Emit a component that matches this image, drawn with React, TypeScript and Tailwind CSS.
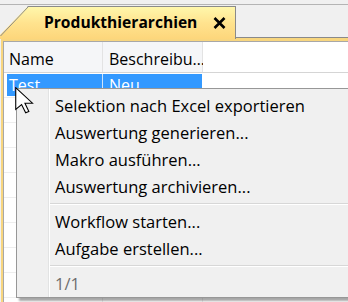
const font = { fontFamily: '"Open Sans", "Noto Sans", sans-serif' };

const items1 = [
  'Selektion nach Excel exportieren',
  'Auswertung generieren...',
  'Makro ausführen...',
  'Auswertung archivieren...',
];
const items2 = ['Workflow starten...', 'Aufgabe erstellen...'];

const MenuItem = ({ label, muted }: { label: string; muted?: boolean }) => (
  <div
    className={`h-[27px] pl-[5px] leading-[27px] text-[16.5px] whitespace-nowrap ${
      muted ? 'text-[#6d6d6d]' : 'text-black'
    }`}
  >
    {label}
  </div>
);

const Separator = () => (
  <div className="h-[8px] pt-[3px]">
    <div className="h-px bg-[#d7d7d7]" />
    <div className="h-px bg-white" />
  </div>
);

const Cursor = () => (
  <svg
    className="absolute left-[15px] top-[87px]"
    width="19"
    height="27"
    viewBox="-0.5 -0.5 13 20"
    preserveAspectRatio="none"
  >
    <path
      d="M0 0 L0 16 L4 12.5 L6.8 18.6 L9 17.6 L6.3 11.5 L11.5 11.5 Z"
      fill="white"
      stroke="black"
      strokeWidth="0.75"
      strokeLinejoin="miter"
    />
  </svg>
);

export default function App() {
  return (
    <div
      className="relative w-[348px] h-[302px] overflow-hidden bg-[#f0f0f0]"
      style={font}
    >
      {/* tab strip */}
      <div className="h-[4px]" />
      <div className="flex h-[34px] border-t border-[#b4b4b4]">
        <div
          className="relative mt-[1px] w-[236px] h-[33px] border-t border-r border-[#8a8a8a] bg-gradient-to-b from-[#fff7ab] via-[#ffe38e] to-[#fdd67b]"
          style={{ clipPath: 'polygon(28px 0, 100% 0, 100% 100%, 0 100%, 0 29px)' }}
        >
          <svg className="absolute left-0 top-[-1px]" width="30" height="32">
            <line x1="0.5" y1="30" x2="28.5" y2="0.5" stroke="#8a8a8a" strokeWidth="1" />
          </svg>
          <div className="flex items-center h-full pl-[44px] pb-[1px]">
            <span className="text-[15.6px] font-bold text-black">Produkthierarchien</span>
            <svg className="ml-[16px]" width="13" height="12" viewBox="0 0 13 12">
              <path d="M1.5 1 L11.5 11 M11.5 1 L1.5 11" stroke="black" strokeWidth="2.6" />
            </svg>
          </div>
        </div>
        <div className="flex-1 border-b border-[#8a8a8a]" />
      </div>

      {/* panel */}
      <div className="ml-[1px] pl-[2px] pt-[3px] bg-[#f8d67f] h-[264px]">
        <div className="h-full border-t border-l border-[#a8a8a8] bg-white">
          {/* header */}
          <div className="flex h-[31px] border-b border-[#d5d5d5] bg-[#f5f6f8] text-[16px] text-black">
            <div className="w-[99px] pl-[5px] pt-[5px] border-r border-[#e3e3e3]">Name</div>
            <div className="w-[100px] pl-[6px] pt-[5px] border-r border-[#e3e3e3]">Beschreibu…</div>
            <div className="flex-1 bg-white" />
          </div>
          {/* selected row */}
          <div className="flex h-[25px] border-b border-[#eeeeee] pt-px pb-px">
            <div className="ml-[3px] w-[95px] bg-[#3399ff] text-white text-[16px] pl-[2px] leading-[23px]">
              Test
            </div>
            <div className="w-px bg-[#cfe4fb]" />
            <div className="w-[99px] bg-[#3399ff] text-white text-[16px] pl-[6px] leading-[23px]">
              Neu
            </div>
          </div>
          {Array.from({ length: 9 }, (_, i) => (
            <div key={i} className="flex h-[25px] border-b border-[#eeeeee]">
              <div className="w-[99px] border-r border-[#eeeeee]" />
              <div className="w-[100px] border-r border-[#eeeeee]" />
            </div>
          ))}
        </div>
      </div>

      {/* context menu */}
      <div className="absolute left-[16px] top-[88px] w-[340px] h-[210px] border border-[#979797] bg-[#f0f0f0] shadow-[3px_3px_2px_rgba(0,0,0,0.35)] flex">
        <div className="w-[32px] border-r border-[#e2e3e3]" />
        <div className="w-px bg-white" />
        <div className="flex-1 pt-[3px]">
          {items1.map((t) => (
            <MenuItem key={t} label={t} />
          ))}
          <Separator />
          {items2.map((t) => (
            <MenuItem key={t} label={t} />
          ))}
          <Separator />
          <MenuItem label="1/1" muted />
        </div>
      </div>

      <Cursor />
    </div>
  );
}
